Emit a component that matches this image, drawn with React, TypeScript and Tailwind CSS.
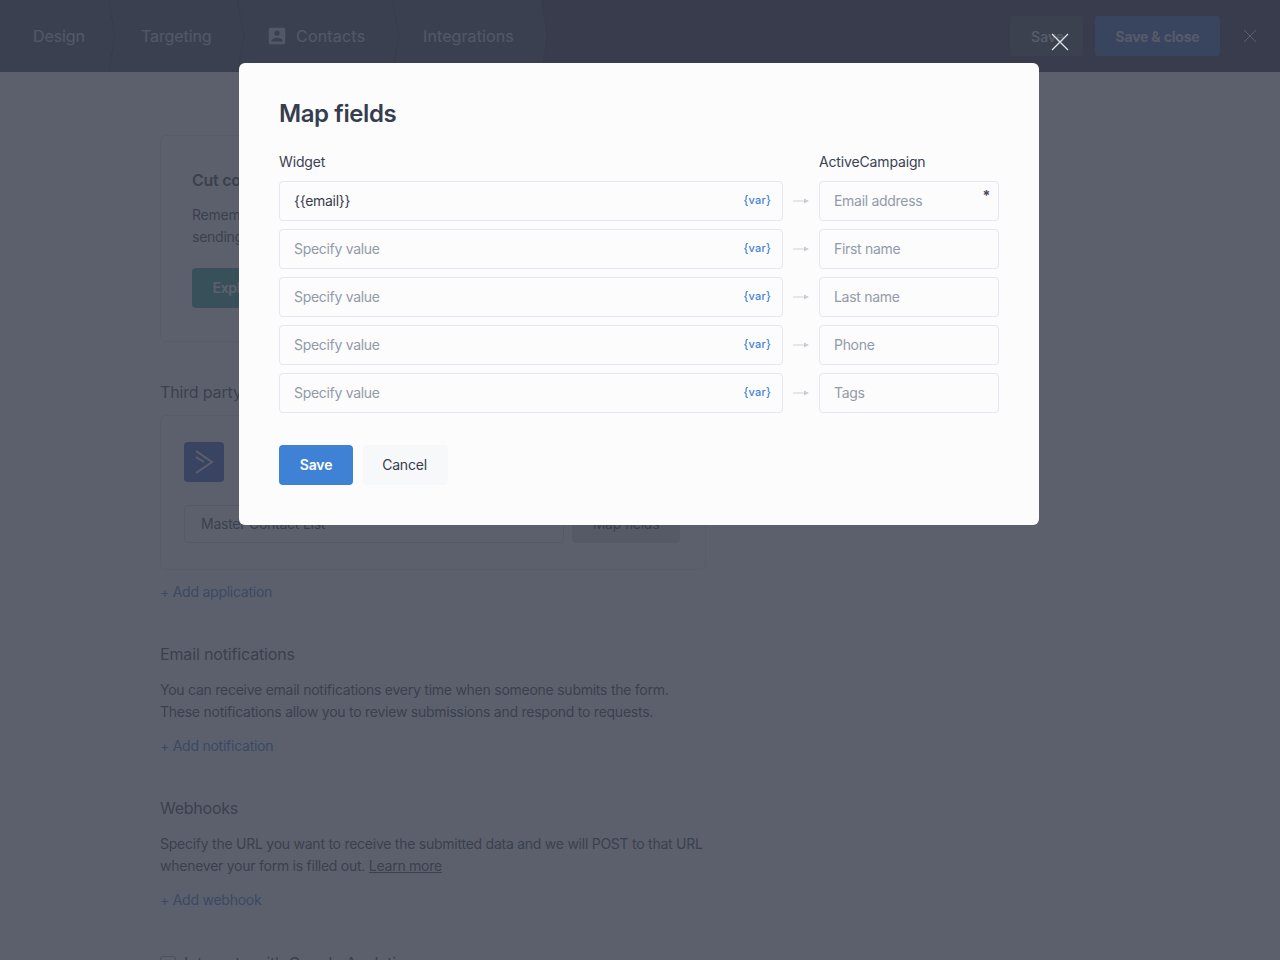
import type { ReactNode } from "react";

const fields = [
  { value: "{{email}}", target: "Email address", required: true },
  { value: "", target: "First name" },
  { value: "", target: "Last name" },
  { value: "", target: "Phone" },
  { value: "", target: "Tags" },
];

function TabEdge({ filled }: { filled?: boolean }) {
  return (
    <svg width="8" height="72" viewBox="0 0 8 72" className="shrink-0">
      {filled && <path d="M0 0 L5.5 36 L0 72 Z" fill="#343c58" />}
      <path d={filled ? "M0.5 0 L6 36 L0.5 72" : "M0.5 0 L7 36 L0.5 72"} fill="none" stroke="#1a1f38" strokeWidth="1" />
    </svg>
  );
}

function Tab({ children, className }: { children: ReactNode; className: string }) {
  return <div className={`flex h-[72px] items-center text-[16px] text-[#c4cae1] ${className}`}>{children}</div>;
}

function Header() {
  return (
    <header className="flex h-[72px] items-center bg-[#1f2440]">
      <div className="flex h-[72px] bg-[#343c58]">
        <Tab className="w-[108px] pl-[33px] tracking-[-0.1px]">Design</Tab>
        <TabEdge />
        <Tab className="w-[121px] pl-[25px] tracking-[-0.1px]">Targeting</Tab>
        <TabEdge />
        <Tab className="w-[147px] gap-[11px] pl-[21px] tracking-[0.2px]">
          <svg width="22" height="22" viewBox="0 0 24 24" fill="currentColor" className="-mr-[3px] shrink-0">
            <path d="M3 5v14c0 1.1.89 2 2 2h14c1.1 0 2-.9 2-2V5c0-1.1-.9-2-2-2H5c-1.11 0-2 .9-2 2zm12 4c0 1.66-1.34 3-3 3s-3-1.34-3-3 1.34-3 3-3 3 1.34 3 3zm-9 8c0-2 4-3.1 6-3.1s6 1.1 6 3.1v1H6v-1z" />
          </svg>
          Contacts
        </Tab>
        <TabEdge />
        <Tab className="w-[141px] pl-[23px] tracking-[0.1px]">Integrations</Tab>
      </div>
      <TabEdge filled />
      <div className="ml-auto flex items-center">
        <button className="h-10 w-[73px] rounded-[4px] bg-[#3c3e55] pl-[2px] text-[14px] font-medium text-[#e6e8ef]">Save</button>
        <button className="ml-3 h-10 w-[125px] rounded-[4px] bg-[#2a52b0] text-[14px] font-bold tracking-[-0.2px] text-[#d8dce6]">
          Save &amp; close
        </button>
        <svg width="14" height="14" viewBox="0 0 14 14" className="mr-[23px] ml-[23px]" stroke="#ffffff" strokeWidth="1">
          <path d="M1 1 L13 13 M13 1 L1 13" />
        </svg>
      </div>
    </header>
  );
}

function AddLink({ children }: { children: ReactNode }) {
  return <a className="block text-[14px] leading-[22px] text-[#2f6fd0]">{children}</a>;
}

function BehindPage() {
  return (
    <main className="ml-[160px] w-[546px] text-[14px] leading-[22px] tracking-[-0.25px] text-[#2d3748]">
      <section className="mt-[63px] h-[207px] rounded-[6px] border border-[#e4e6ea] pt-[32px] pl-[31px]">
        <h3 className="text-[16px] leading-[24px] font-semibold">Cut costs</h3>
        <p className="mt-[12px]">Remember that</p>
        <p>sending emails</p>
        <button className="mt-[20px] h-10 w-[150px] rounded-[4px] bg-[#1a9a8a] pr-[60px] font-semibold text-white">
          Explore
        </button>
      </section>

      <h2 className="mt-[38px] text-[16px] leading-[24px] tracking-[-0.15px]">Third party</h2>
      <section className="mt-[11px] h-[155px] rounded-[6px] border border-[#e4e6ea] pt-[26px] pl-[23px]">
        <div className="flex h-10 w-10 items-center justify-center rounded-[4px] bg-[#2a4ec0]">
          <svg width="20" height="26" viewBox="0 0 20 26" fill="none" stroke="#f4f6ff" strokeWidth="2">
            <path d="M2 2 L18 13 L2 24" />
            <path d="M2 8 L10 13" />
          </svg>
        </div>
        <div className="mt-[23px] flex gap-2">
          <div className="flex h-[38px] w-[380px] items-center rounded-[4px] border border-[#d2d4d9] pl-4">Master Contact List</div>
          <button className="h-[38px] w-[108px] rounded-[4px] bg-[#d7d8d9]">Map fields</button>
        </div>
      </section>
      <div className="mt-[11px]">
        <AddLink>+ Add application</AddLink>
      </div>

      <h2 className="mt-[39px] text-[16px] leading-[24px] tracking-[-0.15px]">Email notifications</h2>
      <p className="mt-[13px] whitespace-nowrap">
        You can receive email notifications every time when someone submits the form.
        <br />
        These notifications allow you to review submissions and respond to requests.
      </p>
      <div className="mt-[12px]">
        <AddLink>+ Add notification</AddLink>
      </div>

      <h2 className="mt-[39px] text-[16px] leading-[24px] tracking-[-0.25px]">Webhooks</h2>
      <p className="mt-[13px] whitespace-nowrap">
        Specify the URL you want to receive the submitted data and we will POST to that URL
        <br />
        whenever your form is filled out. <span className="underline">Learn more</span>
      </p>
      <div className="mt-[12px]">
        <AddLink>+ Add webhook</AddLink>
      </div>

      <label className="mt-[40px] flex items-center gap-2 text-[16px] leading-[24px] tracking-[-0.23px]">
        <span className="mt-[2px] h-4 w-4 rounded-[3px] border border-[#8d93a3]" />
        Integrate with Google Analytics
      </label>
    </main>
  );
}

function FieldRow({ value, target, required }: { value: string; target: string; required?: boolean }) {
  return (
    <div className="flex h-10 items-center">
      <div className="flex h-10 w-[504px] items-center justify-between rounded-[4px] border border-[#e2e7f0] pr-[11px] pb-[2px] pl-[14px] text-[14px] tracking-[-0.3px]">
        {value ? (
          <span className="text-[#363d4e]">{value}</span>
        ) : (
          <span className="text-[#929aaa]">Specify value</span>
        )}
        <span className="text-[11px] font-medium tracking-[0.2px] text-[#3f82d5]">{"{var}"}</span>
      </div>
      <svg width="16" height="8" viewBox="0 0 16 8" className="mx-[10px] shrink-0">
        <path d="M0 4 H11" stroke="#dde0e6" strokeWidth="1.5" />
        <path d="M11 1.5 L16 4 L11 6.5 Z" fill="#c8ccd4" />
      </svg>
      <div className="relative flex h-10 w-[180px] items-center rounded-[4px] border border-[#e2e7f0] pb-[2px] pl-[14px] text-[14px] tracking-[-0.3px] text-[#929aaa]">
        {target}
        {required && <span className="absolute top-[3px] right-[8px] text-[14px] font-bold text-[#444b5a]">*</span>}
      </div>
    </div>
  );
}

function MapFieldsModal() {
  return (
    <div className="mr-[2px] h-[462px] w-[800px] rounded-[6px] bg-[#fcfcfd] px-10 pt-[34px]">
      <h1 className="text-[24px] leading-[34px] font-semibold tracking-[-0.4px] text-[#363d4e]">Map fields</h1>
      <div className="mt-[20px] flex h-[22px] items-center pb-[2px] text-[14px] tracking-[-0.15px] text-[#3a4252]">
        <span className="w-[540px]">Widget</span>
        <span>ActiveCampaign</span>
      </div>
      <div className="mt-2 flex flex-col gap-2">
        {fields.map((f) => (
          <FieldRow key={f.target} value={f.value} target={f.target} required={f.required} />
        ))}
      </div>
      <div className="mt-8 flex gap-[10px]">
        <button className="h-10 w-[74px] rounded-[4px] bg-[#3f82d5] pb-[2px] text-[14px] font-semibold tracking-[-0.1px] text-white">Save</button>
        <button className="h-10 w-[85px] rounded-[4px] bg-[#f7f8fa] pr-[2px] pb-[2px] text-[14px] tracking-[-0.2px] text-[#363d4e]">Cancel</button>
      </div>
    </div>
  );
}

export default function App() {
  return (
    <div className="relative h-[960px] overflow-hidden bg-[#fcfcfd] font-['Inter',sans-serif]">
      <Header />
      <BehindPage />
      <div className="absolute inset-0 flex justify-center bg-[rgba(61,66,80,0.84)] pt-[63px]">
        <MapFieldsModal />
        <svg width="18" height="18" viewBox="0 0 18 18" className="absolute top-[33px] left-[1051px]" stroke="#dfe1e6" strokeWidth="1.25">
          <path d="M1 1 L17 17 M17 1 L1 17" />
        </svg>
      </div>
    </div>
  );
}
